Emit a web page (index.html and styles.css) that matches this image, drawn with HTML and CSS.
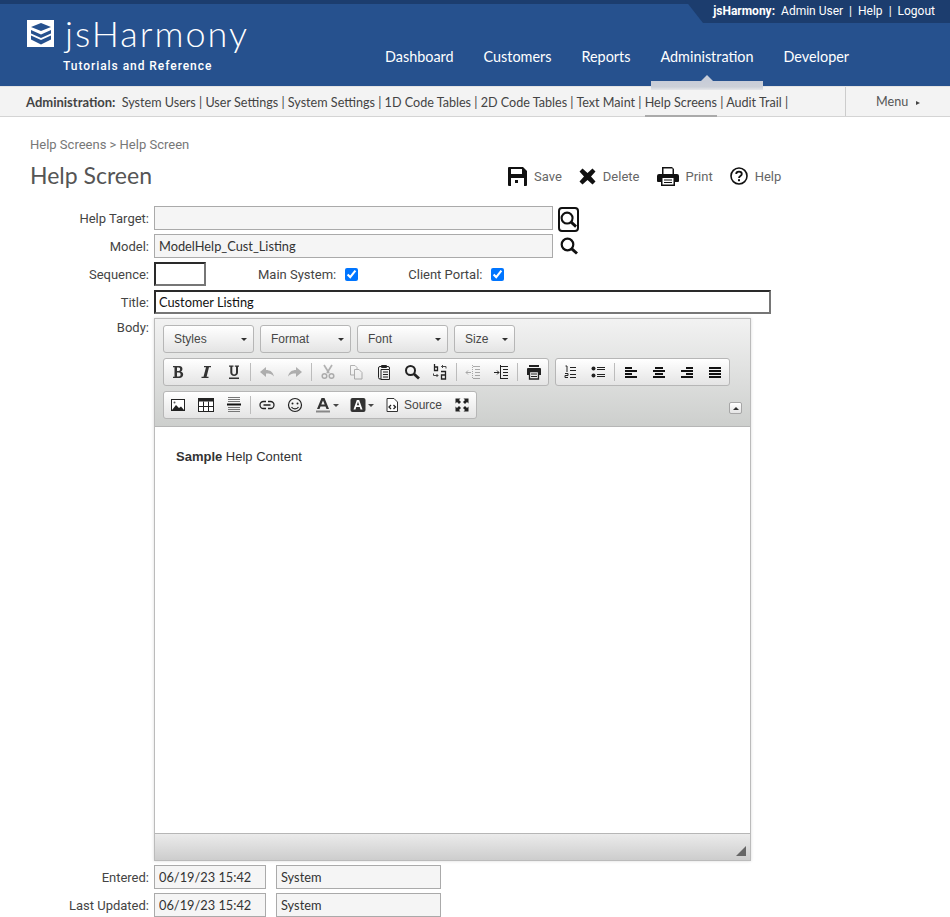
FILE: index.html
```html
<!DOCTYPE html>
<html lang="en">

<head>
    <meta charset="UTF-8">
    <meta name="viewport" content="width=device-width, initial-scale=1.0">
    <title>Help Screen</title>
    <link rel="stylesheet" href="styles.css">
</head>

<body>
    <header class="header">
        <div class="brand">
            <svg class="brand-icon" viewBox="0 0 27 27">
                <rect width="27" height="27" fill="#fff" />
                <path d="M14 3 L24 7 L14 11 L4 7 Z" fill="#26518e" />
                <path d="M4 10 L14 14.500 L24 10 V13.500 L14 18 L4 13.500 Z" fill="#26518e" />
                <path d="M4 15.500 L14 20 L24 15.500 V19.500 L14 24.500 L4 19.500 Z" fill="#26518e" />
            </svg>
            <div class="brand-text">
                <div class="brand-name">jsHarmony</div>
                <div class="brand-sub">Tutorials and Reference</div>
            </div>
        </div>
        <div class="header-right">
            <div class="usertab">
                <b>jsHarmony:</b>
                <a>Admin User</a>
                <span>|</span>
                <a>Help</a>
                <span>|</span>
                <a>Logout</a>
            </div>
            <nav class="mainnav">
                <a>Dashboard</a>
                <a>Customers</a>
                <a>Reports</a>
                <a class="active">Administration</a>
                <a>Developer</a>
            </nav>
        </div>
    </header>

    <div class="subnav">
        <div class="subnav-links">
            <b>Administration:</b>
            <a>System Users</a> | <a>User Settings</a> | <a>System Settings</a> | <a>1D Code Tables</a> | <a>2D Code Tables</a> | <a>Text Maint</a> | <a class="active">Help Screens</a> | <a>Audit Trail</a> |
        </div>
        <div class="subnav-menu">Menu <i></i></div>
    </div>

    <main class="content">
        <div class="breadcrumb">Help Screens &gt; Help Screen</div>
        <div class="titlebar">
            <h1>Help Screen</h1>
            <div class="actions">
                <a class="action-save">
                    <svg width="19" height="19" viewBox="0 0 19 19">
                        <path d="M1 0 H15 L19 4 V18 a1 1 0 0 1 -1 1 H1 a1 1 0 0 1 -1 -1 V1 a1 1 0 0 1 1 -1 Z" fill="#111" />
                        <rect x="3" y="2" width="11" height="5" fill="#fff" />
                        <rect x="3" y="11" width="13" height="8" fill="#fff" />
                        <rect x="7" y="13" width="3" height="3" fill="#111" />
                    </svg>
                    Save
                </a>
                <a class="action-delete">
                    <svg width="17" height="17" viewBox="0 0 17 17">
                        <path d="M3.500 0.500 L8.500 5 L13.500 0.500 L16.500 3.500 L12 8.500 L16.500 13.500 L13.500 16.500 L8.500 12 L3.500 16.500 L0.500 13.500 L5 8.500 L0.500 3.500 Z" fill="#111" />
                    </svg>
                    Delete
                </a>
                <a class="action-print">
                    <svg width="22" height="19" viewBox="0 0 22 19">
                        <path d="M5 0 H15 L17 2 V7 H20 a2 2 0 0 1 2 2 V14 a1 1 0 0 1 -1 1 H18 V19 H4 V15 H1 a1 1 0 0 1 -1 -1 V9 a2 2 0 0 1 2 -2 H5 Z" fill="#111" />
                        <rect x="6.500" y="1.500" width="9" height="5.500" fill="#fff" />
                        <rect x="5.500" y="11" width="11" height="6.500" fill="#fff" />
                        <path d="M7 13 H15 M7 15.500 H15" stroke="#111" stroke-width="1" />
                    </svg>
                    Print
                </a>
                <a class="action-help">
                    <svg width="18" height="18" viewBox="0 0 18 18">
                        <circle cx="9" cy="9" r="8" fill="none" stroke="#111" stroke-width="1.600" />
                        <path d="M6.200 7 C6.200 3.800 11.800 3.800 11.800 7 C11.800 9 9 9 9 11" fill="none" stroke="#111" stroke-width="1.800" />
                        <rect x="8" y="12.200" width="2" height="2" fill="#111" />
                    </svg>
                    Help
                </a>
            </div>
        </div>

        <form class="form">
            <div class="row">
                <label>Help Target:</label>
                <input class="field field-wide" readonly>
                <a class="lookup lookup-focus"><svg><use href="#i-search-big" /></svg></a>
            </div>
            <div class="row">
                <label>Model:</label>
                <input class="field field-wide" value="ModelHelp_Cust_Listing" readonly>
                <a class="lookup"><svg width="18" height="18"><use href="#i-search-big" /></svg></a>
            </div>
            <div class="row">
                <label>Sequence:</label>
                <input class="edit edit-seq">
                <label class="check check-main">Main System:</label>
                <input type="checkbox" checked>
                <label class="check check-portal">Client Portal:</label>
                <input type="checkbox" checked>
            </div>
            <div class="row">
                <label>Title:</label>
                <input class="edit edit-title" value="Customer Listing">
            </div>
            <div class="row row-body">
                <label>Body:</label>
                <div class="editor">
                    <div class="toolbar">
                        <div class="tb-row">
                            <a class="combo combo-lg">Styles<i></i></a>
                            <a class="combo combo-lg">Format<i></i></a>
                            <a class="combo combo-lg">Font<i></i></a>
                            <a class="combo combo-sm">Size<i></i></a>
                        </div>
                        <div class="tb-row">
                            <div class="group">
                                <a class="btn"><svg><use href="#i-bold" /></svg></a>
                                <a class="btn"><svg><use href="#i-italic" /></svg></a>
                                <a class="btn"><svg><use href="#i-underline" /></svg></a>
                                <span class="sep"></span>
                                <a class="btn off"><svg><use href="#i-undo" /></svg></a>
                                <a class="btn off"><svg><use href="#i-redo" /></svg></a>
                                <span class="sep"></span>
                                <a class="btn off"><svg><use href="#i-cut" /></svg></a>
                                <a class="btn off"><svg><use href="#i-copy" /></svg></a>
                                <a class="btn"><svg><use href="#i-paste" /></svg></a>
                                <a class="btn"><svg><use href="#i-find" /></svg></a>
                                <a class="btn"><svg><use href="#i-replace" /></svg></a>
                                <span class="sep"></span>
                                <a class="btn off"><svg><use href="#i-outdent" /></svg></a>
                                <a class="btn"><svg><use href="#i-indent" /></svg></a>
                                <span class="sep"></span>
                                <a class="btn"><svg><use href="#i-print" /></svg></a>
                            </div>
                            <div class="group">
                                <a class="btn"><svg><use href="#i-numlist" /></svg></a>
                                <a class="btn"><svg><use href="#i-bullist" /></svg></a>
                                <span class="sep"></span>
                                <a class="btn"><svg><use href="#i-left" /></svg></a>
                                <a class="btn"><svg><use href="#i-center" /></svg></a>
                                <a class="btn"><svg><use href="#i-right" /></svg></a>
                                <a class="btn"><svg><use href="#i-justify" /></svg></a>
                            </div>
                        </div>
                        <div class="tb-row">
                            <div class="group">
                                <a class="btn"><svg><use href="#i-image" /></svg></a>
                                <a class="btn"><svg><use href="#i-table" /></svg></a>
                                <a class="btn"><svg><use href="#i-hr" /></svg></a>
                                <span class="sep"></span>
                                <a class="btn"><svg><use href="#i-link" /></svg></a>
                                <a class="btn"><svg><use href="#i-smiley" /></svg></a>
                                <a class="btn btn-color"><svg><use href="#i-textcolor" /></svg><i></i></a>
                                <a class="btn btn-color"><svg><use href="#i-bgcolor" /></svg><i></i></a>
                                <a class="btn btn-source"><svg><use href="#i-source" /></svg>Source</a>
                                <a class="btn"><svg><use href="#i-max" /></svg></a>
                            </div>
                            <a class="collapser"><i></i></a>
                        </div>
                    </div>
                    <div class="editor-body"><b>Sample</b> Help Content</div>
                    <div class="editor-foot"><i></i></div>
                </div>
            </div>
            <div class="row row-audit">
                <label>Entered:</label>
                <input class="field field-date" value="06/19/23 15:42" readonly>
                <input class="field field-user" value="System" readonly>
            </div>
            <div class="row">
                <label>Last Updated:</label>
                <input class="field field-date" value="06/19/23 15:42" readonly>
                <input class="field field-user" value="System" readonly>
            </div>
        </form>
    </main>

    <!-- editor and lookup icons -->
    <svg class="sprites">
        <symbol id="i-search-big" viewBox="0 0 18 18">
            <circle cx="7.500" cy="7.500" r="5.800" fill="none" stroke="#111" stroke-width="2.200" />
            <path d="M11.800 11.800 L17 16.500" stroke="#111" stroke-width="3" />
        </symbol>
        <symbol id="i-bold" viewBox="0 0 16 16">
            <path d="M3 2 H9.500 C13 2 13.500 7 10.500 7.600 C14.500 8 14 14 9.500 14 H3 V12.800 H4.500 V3.200 H3 Z M7 3.500 V7 H8.800 C10.600 7 10.600 3.500 8.800 3.500 Z M7 8.500 V12.500 H9 C11.200 12.500 11.200 8.500 9 8.500 Z" fill="#333" fill-rule="evenodd" />
        </symbol>
        <symbol id="i-italic" viewBox="0 0 16 16">
            <path d="M6 2 H13 V3.300 H11 L8.600 12.700 H10.500 V14 H3.500 V12.700 H5.500 L8 3.300 H6 Z" fill="#333" />
        </symbol>
        <symbol id="i-underline" viewBox="0 0 16 16">
            <path d="M3 1.500 H7.500 V2.700 H6.300 V8.500 C6.300 11 10 11 10 8.500 V2.700 H8.800 V1.500 H13 V2.700 H12 V8.500 C12 13 4.300 13 4.300 8.500 V2.700 H3 Z M3 13.500 H13 V15 H3 Z" fill="#333" />
        </symbol>
        <symbol id="i-undo" viewBox="0 0 16 16">
            <path d="M7 3 V6 C11 6 14 8 15 12.500 C13 10 10.500 9.500 7 9.500 V13 L1 8 Z" fill="#333" />
        </symbol>
        <symbol id="i-redo" viewBox="0 0 16 16">
            <path d="M9 3 V6 C5 6 2 8 1 12.500 C3 10 5.500 9.500 9 9.500 V13 L15 8 Z" fill="#333" />
        </symbol>
        <symbol id="i-cut" viewBox="0 0 16 16">
            <path d="M4 1 L9 9 M12 1 L7 9" stroke="#333" stroke-width="1.700" />
            <circle cx="4.500" cy="12" r="2.300" fill="none" stroke="#333" stroke-width="1.500" />
            <circle cx="11.500" cy="12" r="2.300" fill="none" stroke="#333" stroke-width="1.500" />
        </symbol>
        <symbol id="i-copy" viewBox="0 0 16 16">
            <path d="M2.500 1.500 H7 L9 3.500 V5 M2.500 1.500 V11 H6 M6.500 5.500 H11 L14 8.500 V15 H6.500 Z" fill="none" stroke="#333" stroke-width="1" />
        </symbol>
        <symbol id="i-paste" viewBox="0 0 16 16">
            <path d="M5 2.500 H4 a1.500 1.500 0 0 0 -1.500 1.500 V13.500 a1.500 1.500 0 0 0 1.500 1.500 H5 M5 5.500 H13.500 V15.500 H5 Z M11 2.500 H12 a1.500 1.500 0 0 1 1.500 1.500 V5" fill="none" stroke="#222" stroke-width="1" />
            <rect x="5" y="1" width="6" height="3" rx="1" fill="#222" />
            <path d="M7 8 H12 M7 10.500 H12 M7 13 H12" stroke="#222" stroke-width="1" />
        </symbol>
        <symbol id="i-find" viewBox="0 0 16 16">
            <circle cx="6.500" cy="6.500" r="4.500" fill="none" stroke="#222" stroke-width="2" />
            <path d="M10 10 L15 14.500" stroke="#222" stroke-width="2.800" />
        </symbol>
        <symbol id="i-replace" viewBox="0 0 16 16">
            <path d="M2.500 0 V6.500 H5.500 V3 H2.500" fill="none" stroke="#222" stroke-width="1.300" />
            <path d="M14 4.500 V2.500 H9.500 M11 1 L9.500 2.500 L11 4 M1.500 9.500 V11.500 H6 M4.500 10 L6 11.500 L4.500 13" fill="none" stroke="#444" stroke-width="1" />
            <path d="M9 7.500 H13.500 V15 H9.500 V11 H13.500" fill="none" stroke="#222" stroke-width="1.300" />
        </symbol>
        <symbol id="i-outdent" viewBox="0 0 16 16">
            <path d="M8 2.500 H15 M10 5.500 H15 M10 8.500 H15 M10 11.500 H15 M8 14.500 H15" stroke="#222" stroke-width="1" />
            <path d="M7.500 1 V15" stroke="#222" stroke-width="1" stroke-dasharray="1 1" />
            <path d="M1 8.500 H6 M3 6.500 L1 8.500 L3 10.500" fill="none" stroke="#222" stroke-width="1" />
        </symbol>
        <symbol id="i-indent" viewBox="0 0 16 16">
            <path d="M8 2.500 H15 M10 5.500 H15 M10 8.500 H15 M10 11.500 H15 M8 14.500 H15" stroke="#222" stroke-width="1" />
            <path d="M7.500 1 V15" stroke="#222" stroke-width="1" />
            <path d="M1 8.500 H6 M4 6.500 L6 8.500 L4 10.500" fill="none" stroke="#222" stroke-width="1" />
        </symbol>
        <symbol id="i-print" viewBox="0 0 16 16">
            <rect x="3" y="1" width="10" height="2" fill="#222" />
            <path d="M1 5 a1 1 0 0 1 1 -1 H14 a1 1 0 0 1 1 1 V11 H13 V7 H3 V11 H1 Z" fill="#222" />
            <path d="M3.500 7.500 H12.500 V15 H3.500 Z" fill="none" stroke="#222" stroke-width="1.300" />
            <path d="M5 10 H11 M5 12.500 H11" stroke="#222" stroke-width="1.200" />
        </symbol>
        <symbol id="i-numlist" viewBox="0 0 16 16">
            <path d="M8 3.500 H14 M8 6.500 H14 M8 10.500 H14 M8 13.500 H14" stroke="#222" stroke-width="1" />
            <path d="M3.500 2 H5 V8 M3 9.500 H6 V11.500 H3 V13.500 H6" fill="none" stroke="#222" stroke-width="1" />
        </symbol>
        <symbol id="i-bullist" viewBox="0 0 16 16">
            <circle cx="3.500" cy="4.500" r="2" fill="#222" />
            <circle cx="3.500" cy="11.500" r="2" fill="#222" />
            <path d="M7 3.500 H15 M7 5.500 H15 M7 10.500 H15 M7 12.500 H15" stroke="#222" stroke-width="1" />
        </symbol>
        <symbol id="i-left" viewBox="0 0 16 16">
            <path d="M2 4 H9 M2 7 H14 M2 10 H9 M2 13 H14" stroke="#111" stroke-width="2" />
        </symbol>
        <symbol id="i-center" viewBox="0 0 16 16">
            <path d="M4 4 H12 M2 7 H14 M4 10 H12 M2 13 H14" stroke="#111" stroke-width="2" />
        </symbol>
        <symbol id="i-right" viewBox="0 0 16 16">
            <path d="M7 4 H14 M2 7 H14 M7 10 H14 M2 13 H14" stroke="#111" stroke-width="2" />
        </symbol>
        <symbol id="i-justify" viewBox="0 0 16 16">
            <path d="M2 4 H14 M2 7 H14 M2 10 H14 M2 13 H14" stroke="#111" stroke-width="2" />
        </symbol>
        <symbol id="i-image" viewBox="0 0 16 16">
            <rect x="1.500" y="2.500" width="13" height="11" fill="#fff" stroke="#222" />
            <path d="M2 13 L6 8 L9 11 L11 9.500 L14 13 Z" fill="#222" />
            <circle cx="4.500" cy="5.500" r="1" fill="#555" />
        </symbol>
        <symbol id="i-table" viewBox="0 0 16 16">
            <rect x="0.500" y="1.500" width="15" height="13" fill="#fff" stroke="#222" />
            <rect x="0.500" y="1.500" width="15" height="3" fill="#222" />
            <path d="M0.500 9.500 H15.500 M5.500 4.500 V14.500 M10.500 4.500 V14.500" stroke="#222" stroke-width="1" />
        </symbol>
        <symbol id="i-hr" viewBox="0 0 16 16">
            <path d="M2 0.500 H14 M2 2.500 H14 M2 4.500 H14 M2 10.500 H14 M2 12.500 H14 M2 14.500 H14" stroke="#777" stroke-width="1" />
            <path d="M1 7.500 H15" stroke="#111" stroke-width="2" />
        </symbol>
        <symbol id="i-link" viewBox="0 0 16 16">
            <path d="M7 4.500 H4.500 a3.500 3.500 0 0 0 0 7 H7 M9 4.500 H11.500 a3.500 3.500 0 0 1 0 7 H9 M4.500 8 H11.500" fill="none" stroke="#222" stroke-width="1.300" />
        </symbol>
        <symbol id="i-smiley" viewBox="0 0 16 16">
            <circle cx="8" cy="8" r="6.500" fill="none" stroke="#222" stroke-width="1.200" />
            <circle cx="5.500" cy="6.500" r="1" fill="#222" />
            <circle cx="10.500" cy="6.500" r="1" fill="#222" />
            <path d="M4.500 10 C6 12.500 10 12.500 11.500 10" fill="none" stroke="#222" stroke-width="1.200" />
        </symbol>
        <symbol id="i-textcolor" viewBox="0 0 16 16">
            <path d="M6.500 1 H9.500 L14 12 H11.500 L10.500 9.500 H5.500 L4.500 12 H2 Z M6.300 7.500 H9.700 L8 3.500 Z" fill="#333" fill-rule="evenodd" />
            <rect x="1" y="13.500" width="14" height="2" fill="#888" />
        </symbol>
        <symbol id="i-bgcolor" viewBox="0 0 16 16">
            <rect x="0.500" y="1" width="15" height="14" rx="2" fill="#333" />
            <path d="M6.800 3 H9.200 L12.500 12.500 H10.500 L9.800 10 H6.200 L5.500 12.500 H3.500 Z M6.800 8.300 H9.200 L8 4.800 Z" fill="#fff" fill-rule="evenodd" />
        </symbol>
        <symbol id="i-source" viewBox="0 0 16 16">
            <path d="M3 1.500 H10 L13.500 5 V14.500 H3 Z" fill="#fff" stroke="#333" />
            <path d="M7 8 L5 10 L7 12 M9.500 8 L11.500 10 L9.500 12" fill="none" stroke="#222" stroke-width="1.300" />
        </symbol>
        <symbol id="i-max" viewBox="0 0 16 16">
            <path d="M1.500 1.500 H6.500 L5 3 L7 5 L5 7 L3 5 L1.500 6.500 Z M14.500 1.500 H9.500 L11 3 L9 5 L11 7 L13 5 L14.500 6.500 Z M1.500 14.500 H6.500 L5 13 L7 11 L5 9 L3 11 L1.500 9.500 Z M14.500 14.500 H9.500 L11 13 L9 11 L11 9 L13 11 L14.500 9.500 Z" fill="#222" />
        </symbol>
    </svg>
</body>

</html>
```

FILE: styles.css
```css
* {
    margin: 0;
    padding: 0;
    box-sizing: border-box;
}

body {
    font-family: Roboto, "Liberation Sans", sans-serif;
    font-size: 13px;
    color: #444;
    background: #fff;
}

.sprites {
    display: none;
}

/* header */
.header {
    height: 87px;
    background: #26518e;
    border-top: 4px solid #1c3d6e;
    border-bottom: 1px solid #e4e4e4;
    display: flex;
    color: #fff;
}

.brand {
    width: 385px;
    flex-shrink: 0;
    padding: 16px 0 0 27px;
    display: flex;
}

.brand-icon {
    width: 27px;
    height: 27px;
}

.brand-text {
    margin-left: 10px;
}

.brand-name {
    font-family: Lato, sans-serif;
    font-weight: 300;
    font-size: 36px;
    line-height: 30px;
    letter-spacing: 2px;
    padding-left: 1px;
    margin-top: -2px;
}

.brand-sub {
    font-weight: 500;
    font-size: 12px;
    letter-spacing: .95px;
    margin: 11px 0 0 -1px;
}

.header-right {
    flex: 1;
    display: flex;
    flex-direction: column;
}

.usertab {
    align-self: flex-end;
    width: 265px;
    margin-top: -4px;
    height: 23px;
    padding: 4px 15px 0 0;
    background: #1c3d6e;
    clip-path: polygon(0 0, 100% 0, 100% 100%, 18px 100%);
    display: flex;
    justify-content: flex-end;
    gap: 6px;
    font-size: 12px;
    line-height: 15px;
    white-space: nowrap;
}

.mainnav {
    display: flex;
    gap: 30px;
    margin-top: 24px;
    font-family: Lato, sans-serif;
    font-size: 14.400px;
    line-height: 20px;
}

.mainnav .active {
    position: relative;
}

.mainnav .active::before {
    content: "";
    position: absolute;
    left: -9px;
    right: -9px;
    top: 34px;
    height: 9px;
    background: linear-gradient(#c8cdd8 0, #ccd0d8 65%, #e6e7ea 100%);
    z-index: 2;
}

.mainnav .active::after {
    content: "";
    position: absolute;
    left: 50%;
    margin-left: -6px;
    top: 28px;
    border-left: 6px solid transparent;
    border-right: 6px solid transparent;
    border-bottom: 6px solid #c8cdd8;
}

/* sub navigation */
.subnav {
    height: 30px;
    background: #f3f3f3;
    border-bottom: 1px solid #d4d4d4;
    display: flex;
    justify-content: space-between;
    font-family: Lato, sans-serif;
}

.subnav-links {
    padding-left: 26px;
    line-height: 30px;
    font-size: 12.600px;
    color: #444;
    white-space: nowrap;
}

.subnav-links b {
    font-size: 13px;
    margin-right: 3px;
}

.subnav-links .active {
    display: inline-block;
    height: 29px;
    border-bottom: 2px solid #aaa;
}

.subnav-menu {
    width: 105px;
    border-left: 1px solid #ccc;
    padding-left: 30px;
    line-height: 30px;
    font-size: 12.600px;
    color: #555;
}

.subnav-menu i {
    display: inline-block;
    margin-left: 5px;
    vertical-align: 1px;
    border-left: 4px solid #444;
    border-top: 2px solid transparent;
    border-bottom: 2px solid transparent;
}

/* page */
.content {
    padding-top: 20px;
}

.breadcrumb {
    padding-left: 30px;
    line-height: 16px;
    color: #777;
}

.titlebar {
    display: flex;
    align-items: center;
    height: 38px;
    margin-top: 4px;
    padding-left: 30px;
}

.titlebar h1 {
    width: 478px;
    padding-bottom: 2px;
    font-family: Lato, sans-serif;
    font-weight: 400;
    font-size: 23px;
    color: #555;
}

.actions {
    display: flex;
    align-items: center;
    color: #666;
}

.actions a {
    display: flex;
    align-items: center;
}

.action-save {
    gap: 7px;
    margin-right: 17px;
}

.action-delete {
    gap: 7px;
    margin-right: 18px;
}

.action-print {
    gap: 6px;
    margin-right: 17px;
}

.action-help {
    gap: 7px;
}

/* form */
.form {
    margin-top: 11px;
}

.row {
    display: flex;
    align-items: center;
    height: 24px;
    margin-bottom: 4px;
}

.row label {
    line-height: 16px;
    padding-top: 2px;
}

.row > label:first-child {
    width: 149px;
    margin-right: 5px;
    text-align: right;
    flex-shrink: 0;
}

.field,
.edit {
    height: 24px;
    font-family: Lato, sans-serif;
    font-size: 12.800px;
    color: #333;
    padding: 0 4px;
    outline: none;
}

.field {
    background: #f5f5f5;
    border: 1px solid #aaa;
}

.edit {
    background: #fff;
    border: 2px solid;
    border-color: #2a2a2a #767676 #767676 #2a2a2a;
    padding: 0 3px;
    color: #111;
}

.field-wide {
    width: 399px;
}

.field-date {
    width: 112px;
    margin-right: 10px;
}

.field-user {
    width: 165px;
}

.edit-seq {
    width: 52px;
}

.edit-title {
    width: 617px;
}

.lookup {
    margin-left: 7px;
    width: 18px;
    height: 18px;
}

.lookup svg {
    display: block;
}

.lookup-focus {
    margin-left: 5px;
    width: 21px;
    height: 25px;
    padding-top: 2px;
    border: 2px solid #111;
    border-radius: 4px;
    margin-top: 3px;
}

.lookup-focus svg {
    width: 17px;
    height: 17px;
}

.check {
    color: #444;
}

.check-main {
    margin-left: 52px;
    margin-right: 9px;
}

.check-portal {
    margin-left: 50px;
    margin-right: 8px;
}

.row input[type="checkbox"] {
    width: 13px;
    height: 13px;
}

/* rich text editor */
.row-body {
    height: auto;
    align-items: flex-start;
}

.editor {
    width: 597px;
    height: 543px;
    border: 1px solid #bbb;
    display: flex;
    flex-direction: column;
    font-family: "Liberation Sans", Arial, sans-serif;
    font-size: 12px;
    color: #474747;
    box-shadow: 0 0 3px rgba(0, 0, 0, .15);
}

.toolbar {
    height: 108px;
    flex-shrink: 0;
    padding: 6px 8px 0;
    background: linear-gradient(#f2f2f2, #cdcfcd);
    border-bottom: 1px solid #b6b6b6;
}

.tb-row {
    display: flex;
    gap: 6px;
    height: 28px;
    margin-bottom: 5px;
    position: relative;
}

.combo,
.group {
    height: 28px;
    border: 1px solid #b6b6b6;
    border-radius: 3px;
    background: linear-gradient(#fff, #e4e4e4);
}

.combo {
    display: flex;
    align-items: center;
    justify-content: space-between;
    padding: 0 6px 0 10px;
}

.combo i {
    border-left: 3px solid transparent;
    border-right: 3px solid transparent;
    border-top: 3px solid #2f2f2f;
}

.combo-lg {
    width: 91px;
}

.combo-sm {
    width: 61px;
}

.group {
    display: flex;
}

.btn {
    width: 28px;
    height: 26px;
    display: flex;
    align-items: center;
    justify-content: center;
}

.btn svg {
    width: 16px;
    height: 16px;
    display: block;
}

.btn.off svg {
    opacity: .35;
}

.btn-color {
    width: 35px;
    gap: 2px;
}

.btn-color i {
    border-left: 3px solid transparent;
    border-right: 3px solid transparent;
    border-top: 3px solid #474747;
}

.btn-source {
    width: 69px;
    gap: 4px;
    justify-content: flex-start;
    padding-left: 5px;
}

.sep {
    width: 5px;
    display: flex;
    justify-content: center;
    padding: 4px 0;
}

.sep::before {
    content: "";
    width: 1px;
    background: #bcbcbc;
}

.collapser {
    position: absolute;
    right: 0;
    top: 11px;
    width: 13px;
    height: 12px;
    border: 1px solid #a6a6a6;
    border-radius: 2px;
    background: linear-gradient(#fff, #e4e4e4);
    display: flex;
    align-items: center;
    justify-content: center;
}

.collapser i {
    border-left: 3px solid transparent;
    border-right: 3px solid transparent;
    border-bottom: 3px solid #2f2f2f;
}

.editor-body {
    flex: 1;
    padding: 22px 21px;
    background: #fff;
    font-size: 13px;
    line-height: 16px;
    color: #333;
}

.editor-foot {
    height: 27px;
    flex-shrink: 0;
    background: linear-gradient(#ebebeb, #cdcdcd);
    border-top: 1px solid #b6b6b6;
    display: flex;
    justify-content: flex-end;
    align-items: flex-end;
    padding: 0 4px 4px 0;
}

.editor-foot i {
    border-left: 10px solid transparent;
    border-bottom: 10px solid #666;
}

.row-audit {
    margin-top: 1px;
}
```
